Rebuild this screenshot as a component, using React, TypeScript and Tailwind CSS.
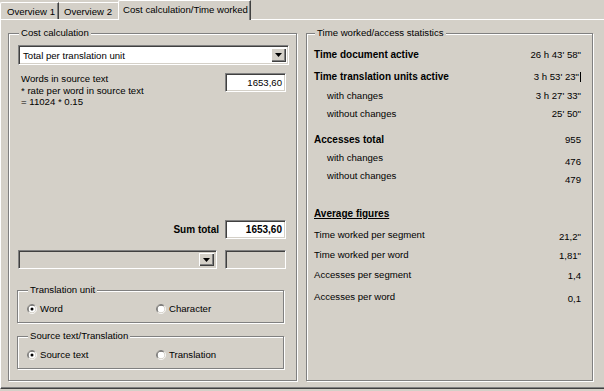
import type { ReactNode } from "react";

// Windows-classic style property page: cost calculation + time statistics

const sunken =
    "border border-t-[#808080] border-l-[#808080] border-r-white border-b-white shadow-[inset_1px_1px_0_#404040,inset_-1px_-1px_0_#d4d0c8]";

function GroupBox({
    label,
    className,
    legend,
    children,
}: {
    label: string;
    className: string;
    legend: string;
    children: ReactNode;
}) {
    return (
        <div
            className={`relative border border-[#808080] shadow-[1px_1px_0_#fff,inset_1px_1px_0_#fff] ${className}`}
        >
            <span className={`absolute top-[-8px] bg-[#d4d0c8] px-[2px] leading-[14px] ${legend}`}>
                {label}
            </span>
            {children}
        </div>
    );
}

function DropButton() {
    return (
        <div className="flex h-full w-[15px] items-center justify-center bg-[#d4d0c8] shadow-[inset_1px_1px_0_#fff,inset_-1px_-1px_0_#404040,inset_-2px_-2px_0_#808080]">
            <svg width="7" height="4" viewBox="0 0 7 4">
                <path d="M0 0 H7 L3.5 4 Z" fill="#000" />
            </svg>
        </div>
    );
}

function Combo({ text, disabled, className }: { text?: string; disabled?: boolean; className: string }) {
    return (
        <div className={`flex p-[2px] ${sunken} ${disabled ? "bg-[#d4d0c8]" : "bg-white"} ${className}`}>
            <div className="flex flex-1 items-center pl-[2px]">{text}</div>
            <DropButton />
        </div>
    );
}

function Radio({ checked, label }: { checked?: boolean; label: string }) {
    return (
        <div className="flex items-center gap-[3px]">
            <svg width="10" height="10" viewBox="0 0 12 12">
                <path d="M2.11 9.89 A5.5 5.5 0 0 1 9.89 2.11" stroke="#808080" fill="none" />
                <path d="M9.89 2.11 A5.5 5.5 0 0 1 2.11 9.89" stroke="#fff" fill="none" />
                <path d="M2.82 9.18 A4.5 4.5 0 0 1 9.18 2.82" stroke="#404040" fill="none" />
                <path d="M9.18 2.82 A4.5 4.5 0 0 1 2.82 9.18" stroke="#d4d0c8" fill="none" />
                <circle cx="6" cy="6" r="4" fill="#fff" />
                {checked && <circle cx="6" cy="6" r="1.8" fill="#000" />}
            </svg>
            <span>{label}</span>
        </div>
    );
}

type StatRow = {
    label: string;
    value: string;
    mt: string;
    bold?: boolean;
    indent?: boolean;
    heading?: boolean;
    drop?: string;
    caret?: boolean;
};

const stats: StatRow[] = [
    { label: "Time document active", value: "26 h 43' 58\"", mt: "mt-[14px]", bold: true },
    { label: "Time translation units active", value: "3 h 53' 23\"", mt: "mt-[9px]", bold: true, caret: true },
    { label: "with changes", value: "3 h 27' 33\"", mt: "mt-[6px]", indent: true },
    { label: "without changes", value: "25' 50\"", mt: "mt-[5px]", indent: true },
    { label: "Accesses total", value: "955", mt: "mt-[13px]", bold: true },
    { label: "with changes", value: "476", mt: "mt-[5px]", indent: true, drop: "pt-[4px]" },
    { label: "without changes", value: "479", mt: "mt-[5px]", indent: true, drop: "pt-[4px]" },
    { label: "Average figures", value: "", mt: "mt-[25px]", heading: true },
    { label: "Time worked per segment", value: "21,2\"", mt: "mt-[8px]", drop: "pt-[2px]" },
    { label: "Time worked per word", value: "1,81\"", mt: "mt-[7px]", drop: "pt-[1px]" },
    { label: "Accesses per segment", value: "1,4", mt: "mt-[7px]", drop: "pt-[1px]" },
    { label: "Accesses per word", value: "0,1", mt: "mt-[9px]", drop: "pt-[2px]" },
];

export default function App() {
    return (
        <div className="h-[391px] w-[604px] overflow-hidden bg-[#d4d0c8] font-['Liberation_Sans',Arial,sans-serif] text-[9.6px] leading-[13px] text-black">
            {/* Tabs */}
            <div className="relative z-10 flex h-[19px] items-end">
                <div className="flex h-[17px] w-[59px] items-center rounded-tl-[2px] border-l border-t border-l-white border-t-white pl-[6px] shadow-[inset_-1px_0_0_#808080] border-r border-r-[#404040]">
                    Overview 1
                </div>
                <div className="flex h-[17px] w-[59px] items-center border-t border-t-white pl-[5px]">Overview 2</div>
                <div className="-mb-px flex h-[20px] w-[133px] items-start rounded-tl-[2px] border-l border-t border-r border-l-white border-t-white border-r-[#404040] bg-[#d4d0c8] pl-[4px] pt-[2px] shadow-[inset_-1px_0_0_#808080]">
                    Cost calculation/Time worked
                </div>
            </div>

            {/* Panel */}
            <div className="flex h-[370px] w-[620px] gap-[9px] border-l border-t border-b border-l-white border-t-white border-b-[#404040] pl-[7px] pt-[13px] shadow-[inset_0_-1px_0_#808080]">
                <GroupBox label="Cost calculation" className="h-[348px] w-[289px]" legend="left-[10px]">
                    <div className="flex flex-col pl-[9px] pr-[7px] pt-[11px]">
                        <Combo className="h-[20px]" text="Total per translation unit" />
                        <div className="flex h-[155px] justify-between pl-[3px] pr-[3px] pt-[8px]">
                            <div className="leading-[11.5px]">
                                <div>Words in source text</div>
                                <div>* rate per word in source text</div>
                                <div>= 11024 * 0.15</div>
                            </div>
                            <div className={`flex h-[19px] w-[61px] items-center justify-end bg-white pr-[3px] ${sunken}`}>
                                1653,60
                            </div>
                        </div>
                        <div className="flex items-center justify-end gap-[6px] pr-[3px]">
                            <span className="text-[10px] font-bold">Sum total</span>
                            <div
                                className={`flex h-[19px] w-[61px] items-center justify-end bg-white pr-[3px] text-[10px] font-bold ${sunken}`}
                            >
                                1653,60
                            </div>
                        </div>
                        <div className="mt-[11px] flex justify-between pr-[3px]">
                            <Combo className="h-[19px] w-[199px]" disabled />
                            <div className={`h-[19px] w-[61px] bg-[#d4d0c8] ${sunken}`} />
                        </div>
                        <GroupBox label="Translation unit" className="mt-[21px] -ml-px h-[33px] w-[267px]" legend="left-[10px]">
                            <div className="flex pl-[9px] pt-[11px]">
                                <div className="w-[129px]">
                                    <Radio checked label="Word" />
                                </div>
                                <Radio label="Character" />
                            </div>
                        </GroupBox>
                        <GroupBox
                            label="Source text/Translation"
                            className="mt-[13px] -ml-px h-[33px] w-[267px]"
                            legend="left-[10px]"
                        >
                            <div className="flex pl-[9px] pt-[11px]">
                                <div className="w-[129px]">
                                    <Radio checked label="Source text" />
                                </div>
                                <Radio label="Translation" />
                            </div>
                        </GroupBox>
                    </div>
                </GroupBox>

                <GroupBox label="Time worked/access statistics" className="h-[348px] w-[287px]" legend="left-[8px]">
                    <div className="flex flex-col pl-[7px] pr-[11px]">
                        {stats.map((r, i) => (
                            <div key={i} className={`flex h-[13px] items-start justify-between ${r.mt}`}>
                                <span
                                    className={`${r.indent ? "pl-[13px]" : ""} ${
                                        r.bold || r.heading ? "text-[10px] font-bold" : ""
                                    } ${r.heading ? "underline" : ""}`}
                                >
                                    {r.label}
                                </span>
                                <span className={`flex items-center ${r.drop ?? ""}`}>
                                    {r.value}
                                    {r.caret && <span className="ml-[1px] inline-block h-[10px] w-px bg-black" />}
                                </span>
                            </div>
                        ))}
                    </div>
                </GroupBox>
            </div>
        </div>
    );
}
